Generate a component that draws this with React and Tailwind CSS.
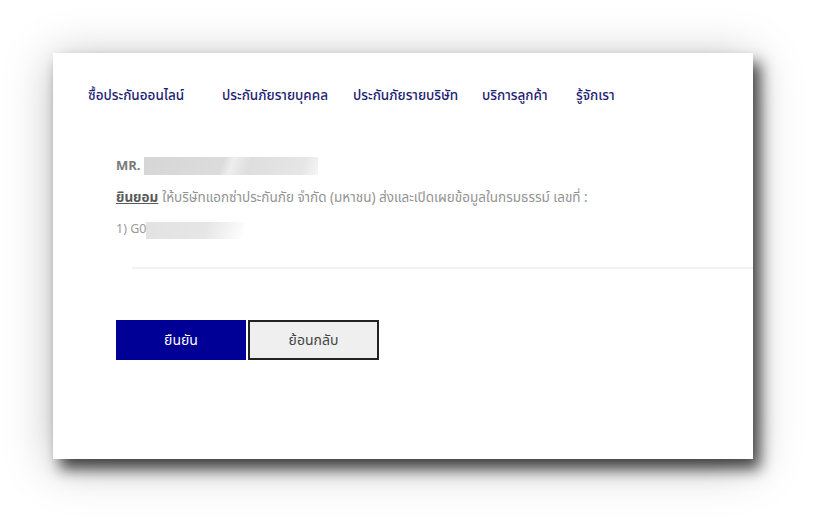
export default function App() {
  const font = { fontFamily: '"Noto Sans Thai", "Noto Sans", "Liberation Sans", sans-serif' };
  return (
    <div className="w-[820px] h-[526px] bg-white overflow-hidden pt-[53px] pl-[53px]" style={font}>
      <div className="w-[700px] h-[406px] bg-white shadow-[7px_10px_14px_rgba(0,0,0,0.7),0_6px_45px_rgba(0,0,0,0.25)] flex flex-col">
        <nav className="flex items-center pl-[35px] pt-[33px] text-[13.5px] font-medium text-[#1e1e72]">
          <span className="w-[134px]">ซื้อประกันออนไลน์</span>
          <span className="w-[131px]">ประกันภัยรายบุคคล</span>
          <span className="w-[129px]">ประกันภัยรายบริษัท</span>
          <span className="w-[94px]">บริการลูกค้า</span>
          <span>รู้จักเรา</span>
        </nav>
        <div className="pl-[63px] pt-[50px] flex flex-col text-[13.5px] text-[#939393]">
          <div className="flex items-center h-[20px]">
            <span className="font-bold text-[13px] text-[#7a7a7a] mr-[3px]">MR.</span>
            <span className="w-[174px] h-[18px] bg-[linear-gradient(110deg,#d6d6d6_0%,#dcdcdc_45%,#eeeeee_50%,#dedede_60%,#e6e6e6_90%,#f6f6f6_100%)]"></span>
          </div>
          <div className="flex items-center h-[20px] mt-[12px]">
            <span className="font-bold underline text-[#5a5a5a] mr-[4px]">ยินยอม</span>
            <span>ให้บริษัทแอกซ่าประกันภัย จำกัด (มหาชน) ส่งและเปิดเผยข้อมูลในกรมธรรม์ เลขที่ :</span>
          </div>
          <div className="flex items-center h-[20px] mt-[12px]">
            <span className="text-[#9a9a9a] text-[12.5px]">1) G0</span>
            <span className="w-[98px] h-[17px] bg-[linear-gradient(110deg,#e2e2e2_0%,#e6e6e6_60%,#f6f6f6_85%,#ffffff_100%)]"></span>
          </div>
        </div>
        <div className="ml-[79px] mt-[27px] h-[2px] bg-[#f2f2f2]"></div>
        <div className="flex pl-[63px] pt-[51px] gap-[2px]">
          <button className="w-[130px] h-[40px] bg-[#000096] text-white text-[14px]">ยืนยัน</button>
          <button className="w-[131px] h-[40px] bg-[#efefef] border-2 border-[#222] text-[#444] text-[14px]">ย้อนกลับ</button>
        </div>
      </div>
    </div>
  );
}
